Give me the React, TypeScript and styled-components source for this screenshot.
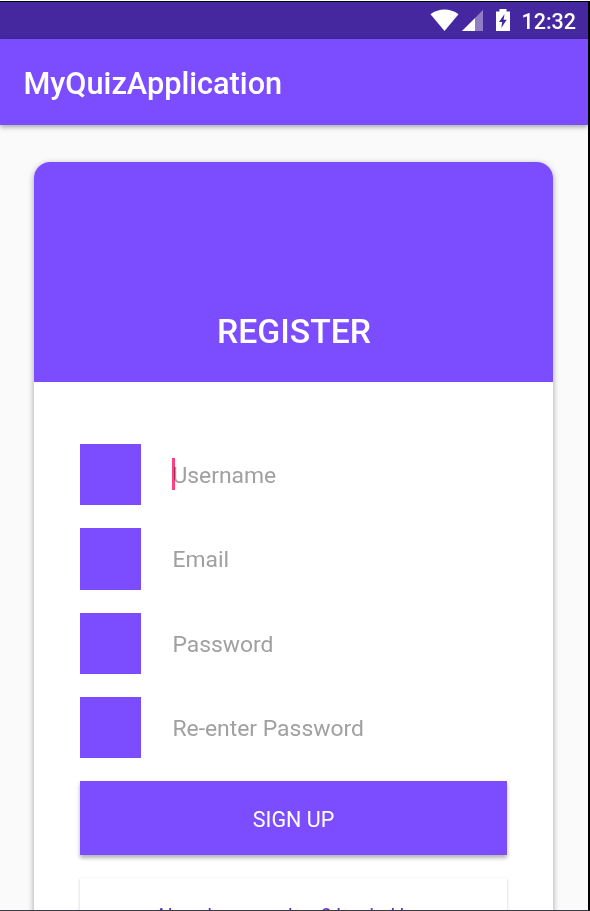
import React from "react";
import styled, { createGlobalStyle } from "styled-components";

const PURPLE = "#7c4dff";

const GlobalStyle = createGlobalStyle`
  * { box-sizing: border-box; }
  html, body { margin: 0; padding: 0; background: #fff; }
  body { font-family: Roboto, sans-serif; overflow: hidden; }
`;

const Frame = styled.div`
  width: 590px;
  height: 910px;
  margin-top: 1px;
  display: flex;
  flex-direction: column;
  overflow: hidden;
  background: #fafafa;
  border: solid #000;
  border-width: 1px 2px 1px 0;
  border-bottom-color: #3c3a40;
`;

const StatusBar = styled.header`
  flex: none;
  height: 37px;
  padding-right: 12px;
  display: flex;
  align-items: center;
  justify-content: flex-end;
  background: #45289f;
  color: #fff;
`;

const StatusIcons = styled.svg`
  display: block;
  margin-right: 9px;
`;

const Clock = styled.span`
  font-size: 21.5px;
  font-weight: 500;
  line-height: 36px;
  padding-top: 2px;
`;

const AppBar = styled.div`
  flex: none;
  position: relative;
  height: 86px;
  padding: 3px 0 0 23.5px;
  display: flex;
  align-items: center;
  background: ${PURPLE};
  box-shadow: 0 2px 5px rgba(0, 0, 0, 0.34);
`;

const Title = styled.h1`
  margin: 0;
  color: #fff;
  font-size: 30.7px;
  font-weight: 500;
`;

const Card = styled.main`
  flex: none;
  width: 519px;
  height: 860px;
  margin: 37px 0 0 34px;
  background: #fff;
  border-radius: 16px;
  box-shadow: 0 2px 6px rgba(0, 0, 0, 0.36);
  overflow: hidden;
`;

const CardHeader = styled.div`
  height: 220.4px;
  padding: 0 0 30.4px 1px;
  display: flex;
  align-items: flex-end;
  justify-content: center;
  background: ${PURPLE};
`;

const Heading = styled.h2`
  margin: 0;
  color: #fff;
  font-size: 33.7px;
  font-weight: 500;
  line-height: 40px;
`;

const Form = styled.form`
  padding: 61.4px 46px 0;
  display: flex;
  flex-direction: column;
  gap: 23px;
`;

const Field = styled.label`
  height: 61.4px;
  display: flex;
  align-items: center;
`;

const Swatch = styled.span`
  width: 61.4px;
  height: 61.4px;
  margin-right: 31px;
  background: ${PURPLE};
`;

const Hint = styled.span`
  position: relative;
  padding-top: 2px;
  color: #a0a0a0;
  font-size: 22.9px;
  line-height: 31px;
`;

const Caret = styled.i`
  position: absolute;
  left: 0;
  top: 0;
  width: 3px;
  height: 32px;
  background: #ff4081;
  mix-blend-mode: multiply;
`;

const Button = styled.button<{ $flat?: boolean }>`
  flex: none;
  height: 73.7px;
  padding: 3px 0 0;
  border: 0;
  font: 400 ${(p) => (p.$flat ? 20 : 21.5)}px Roboto, sans-serif;
  color: ${(p) => (p.$flat ? "#5e35c9" : "#fff")};
  background: ${(p) => (p.$flat ? "#fff" : PURPLE)};
  box-shadow: ${(p) =>
    p.$flat ? "0 1px 3px rgba(0, 0, 0, 0.2)" : "0 3px 4px rgba(0, 0, 0, 0.3)"};
`;

const fields = ["Username", "Email", "Password", "Re-enter Password"];

export default function App() {
  return (
    <>
      <GlobalStyle />
      <Frame>
        <StatusBar>
          <StatusIcons width="82" height="37" viewBox="0 0 82 37" fill="#fff">
            <path d="M0.5 12.2C9 6 20 6 28.5 12.2L14.5 29Z" />
            <path d="M53 8V29H32Z" opacity="0.4" />
            <path d="M45 16.3V29H32Z" />
            <path
              fillRule="evenodd"
              d="M69.5 7H76.5V9.5H80V29H66V9.5H69.5ZM74.5 12L69 20H72.2L71.2 26L76.8 17.8H73.6Z"
            />
          </StatusIcons>
          <Clock>12:32</Clock>
        </StatusBar>
        <AppBar>
          <Title>MyQuizApplication</Title>
        </AppBar>
        <Card>
          <CardHeader>
            <Heading>REGISTER</Heading>
          </CardHeader>
          <Form>
            {fields.map((name, i) => (
              <Field key={name}>
                <Swatch />
                <Hint>
                  {name}
                  {i === 0 && <Caret />}
                </Hint>
              </Field>
            ))}
            <Button type="button">SIGN UP</Button>
            <Button type="button" $flat>
              Already a member ? Login Here
            </Button>
          </Form>
        </Card>
      </Frame>
    </>
  );
}
